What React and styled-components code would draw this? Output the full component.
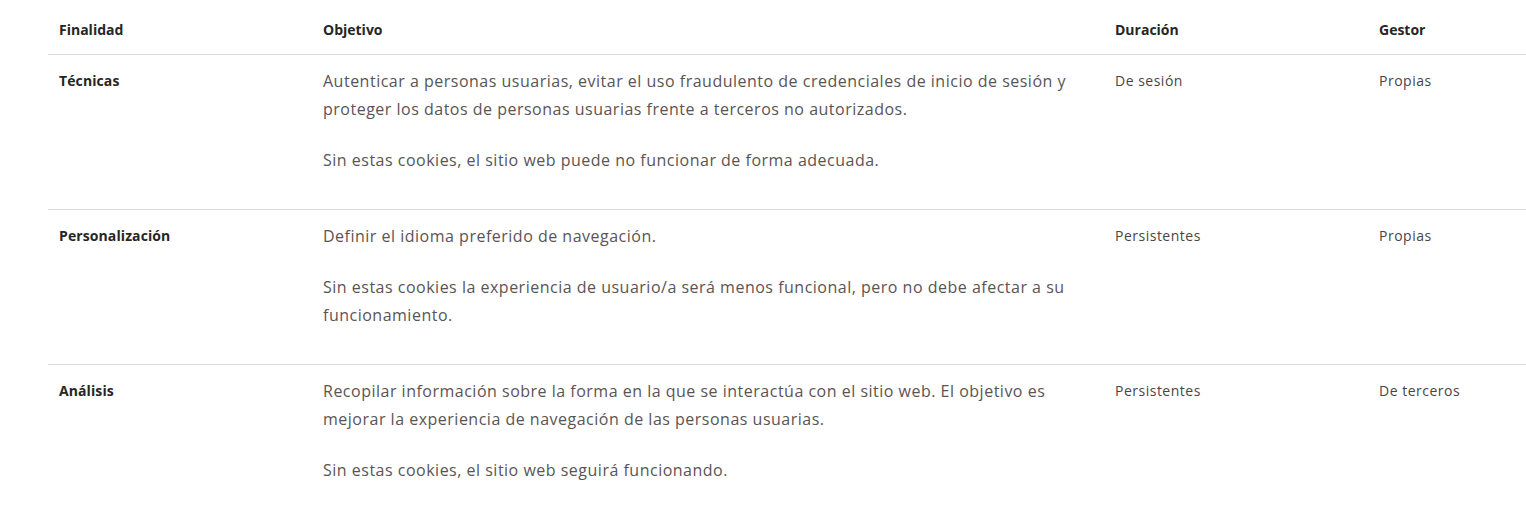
import styled, { createGlobalStyle } from "styled-components";

const GlobalStyle = createGlobalStyle`
  body {
    margin: 0;
    background: #fff;
    font-family: "Open Sans", "Liberation Sans", sans-serif;
  }
`;

const Page = styled.div`
  padding-left: 48px;
  overflow: hidden;
`;

const Table = styled.div`
  display: grid;
  grid-template-columns: 264px 792px 264px 1fr;
`;

const HeadCell = styled.div`
  padding: 20px 11px 14px;
  font-size: 14px;
  line-height: 20px;
  font-weight: 700;
  color: #262626;
  border-bottom: 1px solid #dcdcdc;
`;

const Cell = styled.div`
  padding: 12px 11px 12px;
  font-size: ${(p) => (p.$big ? "16px" : "14px")};
  line-height: 28px;
  letter-spacing: ${(p) => (p.$bold ? "0.1px" : "0.5px")};
  font-weight: ${(p) => (p.$bold ? 700 : 400)};
  color: ${(p) => (p.$bold ? "#262626" : p.$big ? "#5b5454" : "#4a4545")};
  border-bottom: ${(p) => (p.$last ? "none" : "1px solid #dcdcdc")};
`;

const Para = styled.p`
  margin: 0 0 23px;
`;

const rows = [
  {
    finalidad: "Técnicas",
    objetivo: [
      "Autenticar a personas usuarias, evitar el uso fraudulento de credenciales de inicio de sesión y proteger los datos de personas usuarias frente a terceros no autorizados.",
      "Sin estas cookies, el sitio web puede no funcionar de forma adecuada.",
    ],
    duracion: "De sesión",
    gestor: "Propias",
  },
  {
    finalidad: "Personalización",
    objetivo: [
      "Definir el idioma preferido de navegación.",
      "Sin estas cookies la experiencia de usuario/a será menos funcional, pero no debe afectar a su funcionamiento.",
    ],
    duracion: "Persistentes",
    gestor: "Propias",
  },
  {
    finalidad: "Análisis",
    objetivo: [
      "Recopilar información sobre la forma en la que se interactúa con el sitio web. El objetivo es mejorar la experiencia de navegación de las personas usuarias.",
      "Sin estas cookies, el sitio web seguirá funcionando.",
    ],
    duracion: "Persistentes",
    gestor: "De terceros",
  },
];

const App = () => {
  return (
    <>
      <GlobalStyle />
      <Page>
        <Table>
          <HeadCell>Finalidad</HeadCell>
          <HeadCell>Objetivo</HeadCell>
          <HeadCell>Duración</HeadCell>
          <HeadCell>Gestor</HeadCell>
          {rows.map((row, i) => {
            const last = i === rows.length - 1;
            return [
              <Cell key={row.finalidad + "f"} $bold $last={last}>
                {row.finalidad}
              </Cell>,
              <Cell key={row.finalidad + "o"} $big $last={last}>
                {row.objetivo.map((t) => (
                  <Para key={t}>{t}</Para>
                ))}
              </Cell>,
              <Cell key={row.finalidad + "d"} $last={last}>
                {row.duracion}
              </Cell>,
              <Cell key={row.finalidad + "g"} $last={last}>
                {row.gestor}
              </Cell>,
            ];
          })}
        </Table>
      </Page>
    </>
  );
};

export default App;
